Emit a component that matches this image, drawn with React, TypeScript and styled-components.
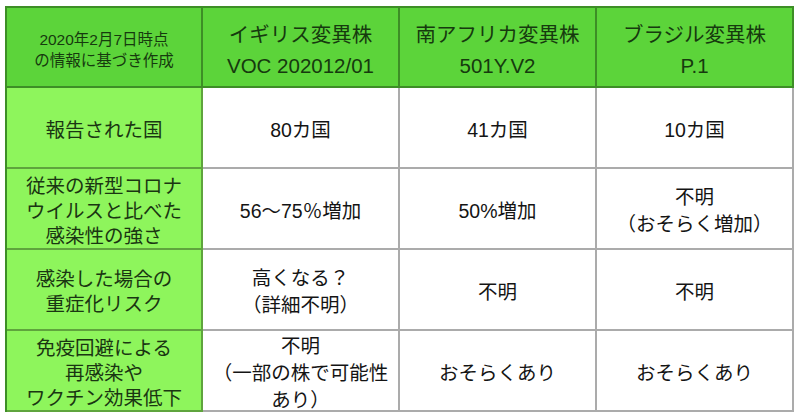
import React from 'react';
import styled, { createGlobalStyle } from 'styled-components';

const GlobalStyle = createGlobalStyle`
  html, body {
    margin: 0;
    padding: 0;
    background: #ffffff;
  }
  body {
    font-family: "Liberation Sans", "Noto Sans CJK JP", sans-serif;
  }
`;

const Page = styled.div`
  padding: 6px 0 0 5px;
`;

const Grid = styled.div`
  display: grid;
  grid-template-columns: 196px 197px 197px 197px;
  grid-template-rows: 80px repeat(4, 81px);
  width: max-content;
  border-top: 2px solid rgba(0, 0, 0, 0.33);
  border-left: 2px solid rgba(0, 0, 0, 0.33);
  background: #5cd43a;
`;

const Cell = styled.div`
  box-sizing: border-box;
  display: flex;
  flex-direction: column;
  align-items: center;
  justify-content: center;
  text-align: center;
  white-space: nowrap;
  border-right: 2px solid rgba(0, 0, 0, 0.33);
  border-bottom: 2px solid rgba(0, 0, 0, 0.33);
  padding-top: 5px;
`;

const HeadCell = styled(Cell)<{ $note?: boolean }>`
  background: #5cd43a;
  color: #163a0e;
  font-size: ${p => (p.$note ? '15.5px' : '20.5px')};
  line-height: ${p => (p.$note ? '21px' : '31px')};
`;

const LabelCell = styled(Cell)`
  background: #8ef55c;
  color: #1a3612;
  font-size: 19.5px;
  line-height: 25px;
`;

const ValueCell = styled(Cell)`
  background: #ffffff;
  color: #141414;
  font-size: 19.5px;
  line-height: 27px;
`;

type Row = { label: string[]; values: string[][] };

const HEADERS: string[][] = [
  ['イギリス変異株', 'VOC 202012/01'],
  ['南アフリカ変異株', '501Y.V2'],
  ['ブラジル変異株', 'P.1'],
];

const ROWS: Row[] = [
  { label: ['報告された国'], values: [['80カ国'], ['41カ国'], ['10カ国']] },
  {
    label: ['従来の新型コロナ', 'ウイルスと比べた', '感染性の強さ'],
    values: [['56〜75％増加'], ['50%増加'], ['不明', '（おそらく増加）']],
  },
  {
    label: ['感染した場合の', '重症化リスク'],
    values: [['高くなる？', '（詳細不明）'], ['不明'], ['不明']],
  },
  {
    label: ['免疫回避による', '再感染や', 'ワクチン効果低下'],
    values: [['不明', '（一部の株で可能性', 'あり）'], ['おそらくあり'], ['おそらくあり']],
  },
];

const renderLines = (lines: string[]) =>
  lines.map((l, i) => <div key={i}>{l}</div>);

export default function App() {
  return (
    <>
      <GlobalStyle />
      <Page>
        <Grid>
          <HeadCell $note>{renderLines(['2020年2月7日時点', 'の情報に基づき作成'])}</HeadCell>
          {HEADERS.map((h, i) => (
            <HeadCell key={i}>{renderLines(h)}</HeadCell>
          ))}
          {ROWS.map((row, i) => (
            <React.Fragment key={i}>
              <LabelCell>{renderLines(row.label)}</LabelCell>
              {row.values.map((v, j) => (
                <ValueCell key={j}>{renderLines(v)}</ValueCell>
              ))}
            </React.Fragment>
          ))}
        </Grid>
      </Page>
    </>
  );
}
